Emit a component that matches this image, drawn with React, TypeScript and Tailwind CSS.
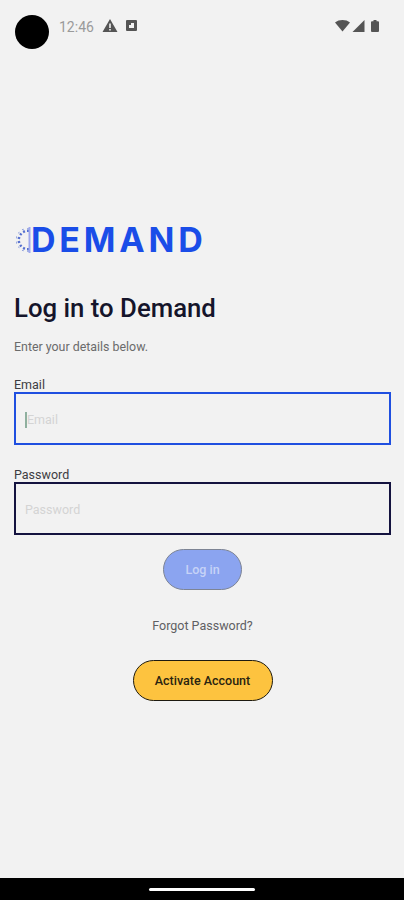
const roboto = "font-['Roboto',sans-serif]";

function StatusBar() {
  return (
    <div className="flex h-[64px] items-start pl-[15px] pr-[25px] pt-[15px]">
      <div className="h-[34px] w-[34px] rounded-full bg-black" />
      <span className="ml-[10px] mt-[3px] text-[14px] leading-[18px] text-[#9a9a9a]">12:46</span>
      <svg className="ml-[8px] mt-[3px]" width="16" height="15" viewBox="0 0 16 15">
        <path fillRule="evenodd" fill="#555" d="M8 1 15.5 14H.5ZM7.2 5.5v4.500h1.600V5.500ZM7.2 11v1.600h1.600V11Z" />
      </svg>
      <svg className="ml-[8px] mt-[5px]" width="11" height="11" viewBox="0 0 11 11">
        <path fillRule="evenodd" fill="#555" d="M1 0h9a1 1 0 0 1 1 1v9a1 1 0 0 1-1 1H1a1 1 0 0 1-1-1V1a1 1 0 0 1 1-1ZM5 3v2H3v3h5V3Z" />
      </svg>
      <div className="ml-auto mt-[5px] flex items-center gap-[2px]">
        <svg width="15" height="12" viewBox="0 0 15 12">
          <path fill="#555" d="M0 2.500C4-.8 11-.8 15 2.500L7.500 11.500Z" />
        </svg>
        <svg width="13" height="12" viewBox="0 0 13 12">
          <path fill="#555" d="M12.500 0v12H.5Z" />
        </svg>
        <svg className="ml-[4px]" width="8" height="12" viewBox="0 0 8 12">
          <path fill="#555" d="M2.500 0h3v1.200H7a1 1 0 0 1 1 1V11a1 1 0 0 1-1 1H1a1 1 0 0 1-1-1V2.200a1 1 0 0 1 1-1h1.500Z" />
        </svg>
      </div>
    </div>
  );
}

function Logo() {
  const ticks = [0, 1, 2, 3, 4, 5, 6, 7];
  return (
    <div className="flex h-[30px] items-center">
      <svg width="18" height="28" viewBox="0 0 18 28">
        {ticks.map((t) => {
          const a = ((t * 180) / 7 + 90) * (Math.PI / 180);
          return (
            <line
              key={t}
              x1={14 + Math.cos(a) * 8}
              y1={14 - Math.sin(a) * 8}
              x2={14 + Math.cos(a) * 12}
              y2={14 - Math.sin(a) * 12}
              stroke="#2f50c8"
              strokeWidth="2"
              strokeDasharray="2.500 1"
              opacity="0.8"
            />
          );
        })}
        <rect x="14.500" y="1" width="2" height="26" fill="#9fa9ee" />
      </svg>
      <span className="ml-[-1px] font-['Inter',sans-serif] text-[34px] font-bold leading-[30px] tracking-[3.800px] text-[#1a4de8]">
        DEMAND
      </span>
    </div>
  );
}

function Field({ label, focused }: { label: string; focused?: boolean }) {
  return (
    <div>
      <div className="text-[12.500px] leading-[14px] text-[#3d3d42]">{label}</div>
      <div
        className={
          focused
            ? "flex h-[53px] items-center border-2 border-[#1f4fe0] pl-[9px] pt-[3px] text-[12.500px] text-[#d4d4d4]"
            : "flex h-[53px] items-center border-2 border-[#14133f] pl-[9px] pt-[3px] text-[12.500px] text-[#d4d4d4]"
        }
      >
        {focused && <span className="h-[16px] w-[2px] bg-[#8fb09f]" />}
        {label}
      </div>
    </div>
  );
}

export default function App() {
  return (
    <div className={`flex h-[900px] w-[404px] flex-col overflow-hidden bg-[#f2f2f2] ${roboto}`}>
      <StatusBar />
      <main className="flex flex-1 flex-col pl-[14px] pr-[13px]">
        <div className="mt-[161px]">
          <Logo />
        </div>
        <h1 className="mt-[38px] text-[25.750px] font-medium leading-[30px] text-[#15152b]">Log in to Demand</h1>
        <p className="mt-[17px] text-[12.400px] leading-[14px] text-[#6b6b6b]">Enter your details below.</p>
        <div className="mt-[24px] flex flex-col gap-[23px]">
          <Field label="Email" focused />
          <Field label="Password" />
        </div>
        <div className="mt-[14px] flex flex-col items-center">
          <button className="h-[41px] w-[79px] rounded-full border border-[#7d8494] bg-[#8ba4f0] pt-[2px] text-[12.500px] font-medium text-[#c6d3f7]">
            Log in
          </button>
          <div className="mt-[29px] text-[12.500px] leading-[14px] text-[#5f5f63]">Forgot Password?</div>
          <button className="mt-[27px] h-[41px] w-[140px] rounded-full border-[1.500px] border-[#1d1a10] bg-[#fdc33f] pt-[2px] text-[12.500px] font-medium text-[#2a2410]">
            Activate Account
          </button>
        </div>
      </main>
      <div className="flex h-[22px] items-start justify-center bg-black pt-[10px]">
        <div className="h-[3px] w-[106px] rounded-full bg-white" />
      </div>
    </div>
  );
}
